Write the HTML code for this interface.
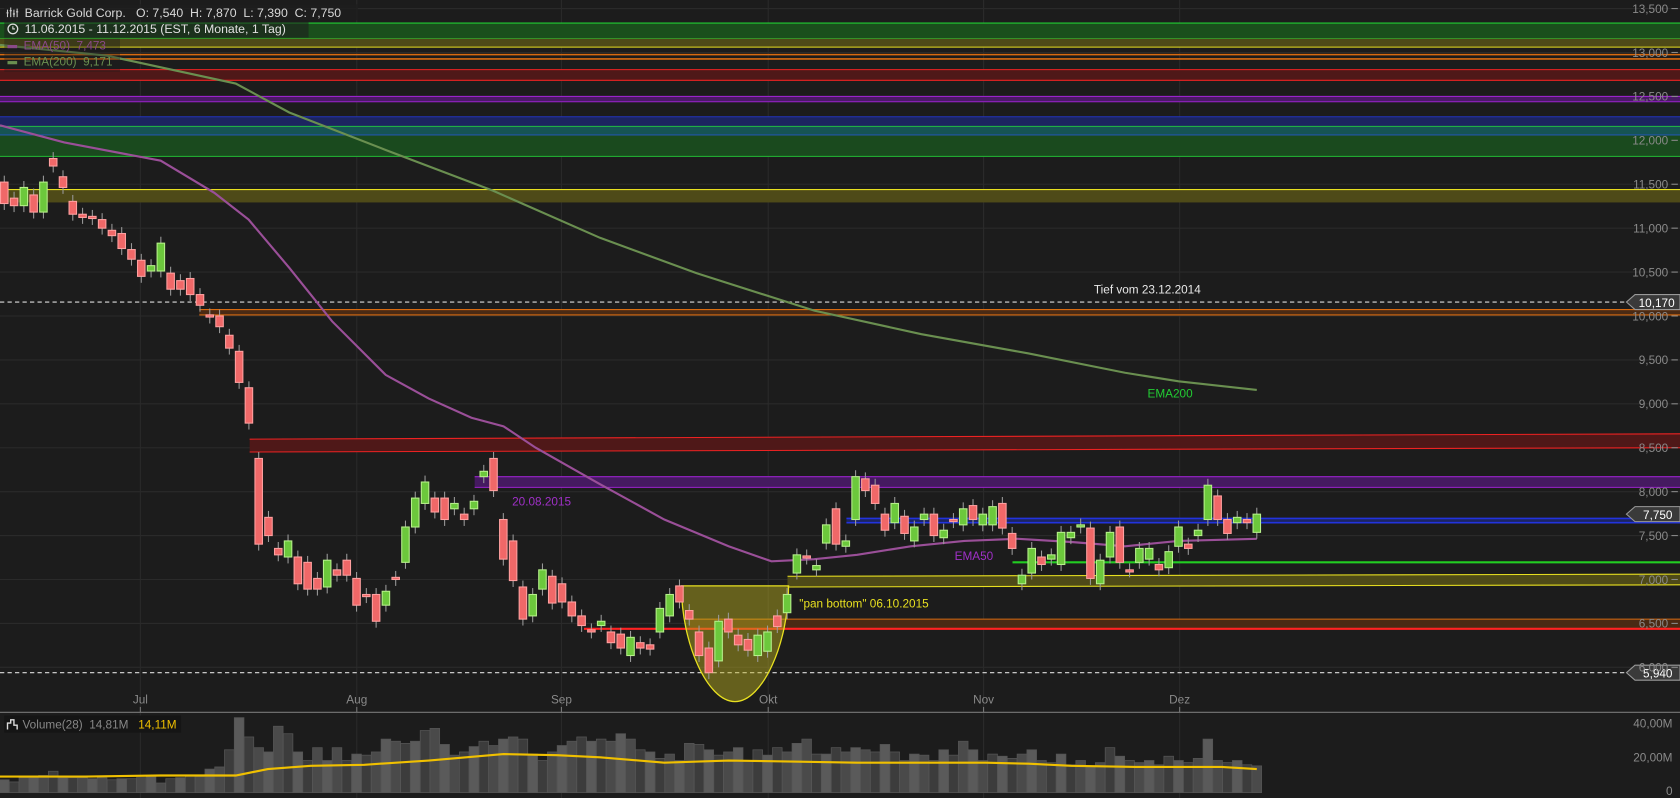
<!DOCTYPE html>
<html><head><meta charset="utf-8"><style>
html,body{margin:0;padding:0;background:#1c1c1c;overflow:hidden}
svg{display:block}
text{font-family:"Liberation Sans",sans-serif;white-space:pre}
</style></head><body>
<svg id="c" width="1680" height="798" viewBox="0 0 1568 745" preserveAspectRatio="none" xmlns="http://www.w3.org/2000/svg" xml:space="preserve">
<rect width="1568" height="745" fill="#1c1c1c"/>
<g id="grid" stroke="#2a2a2a" stroke-width="1"></g>
<rect x="0" y="21" width="1568" height="15" fill="#1a4f1c"/>
<line x1="0" y1="21.5" x2="1568" y2="21.5" stroke="#22cc33"/>
<line x1="0" y1="36" x2="1568" y2="36" stroke="#22cc33"/>
<rect x="0" y="36" width="1568" height="8" fill="#4e4a18"/>
<line x1="0" y1="44" x2="1568" y2="44" stroke="#e8e020"/>
<line x1="0" y1="51" x2="1568" y2="51" stroke="#d86a10" stroke-width="1.5"/>
<line x1="0" y1="55" x2="1568" y2="55" stroke="#d86a10" stroke-width="1.5"/>
<rect x="0" y="65" width="1568" height="10" fill="#4f1818"/>
<line x1="0" y1="65" x2="1568" y2="65" stroke="#ee2222"/>
<line x1="0" y1="75" x2="1568" y2="75" stroke="#ee2222"/>
<rect x="0" y="90" width="1568" height="5" fill="#4a1a66"/>
<line x1="0" y1="90" x2="1568" y2="90" stroke="#9a22cc"/>
<line x1="0" y1="95" x2="1568" y2="95" stroke="#9a22cc"/>
<rect x="0" y="109" width="1568" height="9" fill="#1c2560"/>
<line x1="0" y1="109" x2="1568" y2="109" stroke="#2233bb"/>
<rect x="0" y="118" width="1568" height="8" fill="#165454"/>
<line x1="0" y1="118" x2="1568" y2="118" stroke="#22bb44"/>
<rect x="0" y="126" width="1568" height="20" fill="#1a4a1e"/>
<line x1="0" y1="126" x2="1568" y2="126" stroke="#2255aa"/>
<line x1="0" y1="146" x2="1568" y2="146" stroke="#22bb33"/>
<rect x="0" y="177" width="1568" height="12" fill="#4e4a18"/>
<line x1="0" y1="177" x2="1568" y2="177" stroke="#e8e020"/>
<line x1="0" y1="282" x2="1520" y2="282" stroke="#ddd" stroke-dasharray="4,3"/>
<rect x="186" y="289" width="1382" height="5" fill="#4a2a14"/>
<line x1="186" y1="289" x2="1568" y2="289" stroke="#d86a10"/>
<line x1="186" y1="294" x2="1568" y2="294" stroke="#d86a10"/>
<polygon points="233,410 1568,405 1568,418 233,422" fill="#4f1818"/>
<line x1="233" y1="410" x2="1568" y2="405" stroke="#ee2222"/>
<line x1="233" y1="422" x2="1568" y2="418" stroke="#ee2222"/>
<rect x="443" y="445" width="1125" height="10" fill="#451a60"/>
<line x1="443" y1="445" x2="1568" y2="445" stroke="#9a22cc"/>
<line x1="443" y1="455" x2="1568" y2="455" stroke="#9a22cc"/>
<rect x="790" y="484" width="778" height="4" fill="#1c2560"/>
<line x1="790" y1="484" x2="1568" y2="484" stroke="#2233dd" stroke-width="1.5"/>
<line x1="790" y1="488" x2="1568" y2="488" stroke="#2233dd" stroke-width="1.5"/>
<line x1="945" y1="525" x2="1568" y2="525" stroke="#22cc22" stroke-width="2"/>
<polygon points="735,538 1568,536 1568,546 735,548" fill="#4e4a18"/>
<line x1="735" y1="538" x2="1568" y2="536" stroke="#e8e020"/>
<line x1="735" y1="548" x2="1568" y2="546" stroke="#e8e020"/>
<rect x="643" y="578" width="925" height="9" fill="#4a2a14"/>
<line x1="643" y1="578" x2="1568" y2="578" stroke="#d86a10"/>
<line x1="545" y1="587" x2="1568" y2="587" stroke="#ff2222" stroke-width="2"/>
<line x1="0" y1="628" x2="1520" y2="628" stroke="#ddd" stroke-dasharray="4,3"/>
<path d="M636,547 L736,547 C736,600 712,655 686,655 C660,655 636,600 636,547 Z" fill="rgba(190,180,30,0.45)" stroke="#e8e020" stroke-width="1.2"/>
<polyline fill="none" stroke="#6a8f50" stroke-width="2" points="0,42 100,52 220,78 270,105 360,140 460,178 560,222 650,255 760,290 860,312 960,330 1050,348 1100,356 1173,364"/>
<polyline fill="none" stroke="#9a4f98" stroke-width="2" points="0,117 60,133 150,150 200,180 232,205 270,250 310,300 360,350 400,372 440,390 470,398 500,418 560,452 620,485 680,510 720,524 760,522 800,518 850,510 900,505 950,503 1000,506 1050,510 1100,505 1173,503"/>
<g id="candles"></g>
<text x="1021" y="274" fill="#e8e8e8" font-size="11">Tief vom 23.12.2014</text>
<text x="1071" y="371" fill="#22cc33" font-size="11">EMA200</text>
<text x="478" y="472" fill="#a030c8" font-size="11">20.08.2015</text>
<text x="891" y="523" fill="#a030c8" font-size="11">EMA50</text>
<text x="746" y="567" fill="#e8e020" font-size="11">"pan bottom" 06.10.2015</text>
<polygon points="1518,282 1526,275 1568,275 1568,289 1526,289" fill="#3a3a3a" stroke="#999"/>
<text x="1563" y="286.5" fill="#fff" font-size="11" text-anchor="end">10,170</text>
<polygon points="1518,480 1526,473 1568,473 1568,487 1526,487" fill="#3a3a3a" stroke="#999"/>
<text x="1561" y="484.5" fill="#fff" font-size="11" text-anchor="end">7,750</text>
<polygon points="1518,628 1526,621 1568,621 1568,635 1526,635" fill="#3a3a3a" stroke="#999"/>
<text x="1561" y="632.5" fill="#fff" font-size="11" text-anchor="end">5,940</text>
<g id="axis" fill="#8a8a8a" font-size="11"></g>
<rect x="4" y="4" width="330" height="15" fill="rgba(30,30,30,0.75)"/>
<path d="M7,9 V16 M10,7 V16 M13,9 V16 M16,8 V16 M6,12 H8 M9,10 H11 M12,13 H14 M15,11 H17" stroke="#ccc" stroke-width="1"/>
<text x="23" y="16" fill="#d8d8d8" font-size="11.5">Barrick Gold Corp.   O: 7,540  H: 7,870  L: 7,390  C: 7,750</text>
<rect x="4" y="20" width="284" height="15" fill="rgba(30,30,30,0.6)"/>
<circle cx="12" cy="27" r="4.5" fill="none" stroke="#ddd" stroke-width="1.2"/>
<path d="M12,24.5 V27 H14" fill="none" stroke="#ddd" stroke-width="1"/>
<text x="23" y="31" fill="#e0e0e0" font-size="11.5">11.06.2015 - 11.12.2015 (EST, 6 Monate, 1 Tag)</text>
<rect x="4" y="36" width="108" height="31" fill="rgba(30,30,30,0.35)"/>
<rect x="7" y="42" width="9" height="3" fill="#8a4a88"/>
<text x="22" y="46" fill="#8a4a88" font-size="11">EMA(50)  7,473</text>
<rect x="7" y="57" width="9" height="3" fill="#6a8f50"/>
<text x="22" y="61" fill="#6a8f50" font-size="11">EMA(200)  9,171</text>
<line x1="0" y1="665" x2="1568" y2="665" stroke="#777"/>
<g id="vol"></g>
<polyline fill="none" stroke="#f0c000" stroke-width="2" points="0,725 80,725 150,724 220,724 250,718 290,715 340,714 400,710 470,704 520,705 560,707 620,712 680,710 740,711 800,712 860,712 920,712 960,713 1000,715 1060,716 1120,716 1140,716 1173,718"/>
<rect x="4" y="668" width="165" height="16" fill="#151515"/>
<path d="M7,681 V675 H10 V672 H13 V677 H16 V681" fill="none" stroke="#ddd" stroke-width="1.3"/>
<text x="21" y="680" fill="#888" font-size="11">Volume(28)  14,81M</text>
<text x="129" y="680" fill="#f0c000" font-size="11">14,11M</text>
<text x="1561" y="679" fill="#8a8a8a" font-size="11" text-anchor="end">40,00M</text>
<text x="1561" y="711" fill="#8a8a8a" font-size="11" text-anchor="end">20,00M</text>
<text x="1561" y="742" fill="#8a8a8a" font-size="11" text-anchor="end">0</text>
</svg>
<script>
var NS="http://www.w3.org/2000/svg";
function el(t,a,p){var e=document.createElementNS(NS,t);for(var k in a)e.setAttribute(k,a[k]);(p||document.getElementById("c")).appendChild(e);return e;}
var grid=document.getElementById("grid"),axis=document.getElementById("axis");
function y(p){return 8+(13500-p)*0.082;}
for(var p=13500;p>=6000;p-=500){var yy=y(p);el("line",{x1:0,y1:yy,x2:1568,y2:yy},grid);
 var t=el("text",{x:1557,y:yy+4,"text-anchor":"end"},axis);t.textContent=(p/1000).toFixed(3).replace(".",",");
 el("line",{x1:1560,y1:yy,x2:1566,y2:yy,stroke:"#8a8a8a"},axis);}
var months=[["Jul",131],["Aug",333],["Sep",524],["Okt",717],["Nov",918],["Dez",1101]];
months.forEach(function(m){el("line",{x1:m[1],y1:0,x2:m[1],y2:745},grid);
 var t=el("text",{x:m[1],y:657,"text-anchor":"middle"},axis);t.textContent=m[0];
 el("line",{x1:m[1],y1:660,x2:m[1],y2:665,stroke:"#777"},axis);});
var d=[[170,190,0],[185,192,0],[175,192,1],[182,198,0],[170,198,1],[148,155,0],[165,175,0],[188,200,0],[200,203,0],[202,204,0],[205,213,0],[215,220,0],[218,232,0],[233,242,0],[243,258,0],[248,253,1],[227,253,1],[255,270,0],[262,270,0],[260,275,0],[275,285,0],[294,296,0],[295,305,0],[313,325,0],[328,357,0],[362,395,0],[428,508,0],[483,500,0],[512,518,0],[505,520,1],[520,545,0],[525,550,0],[540,550,0],[523,548,1],[532,537,0],[523,537,0],[540,565,0],[555,557,0],[555,580,0],[552,565,1],[539,541,0],[492,525,1],[465,492,1],[450,470,1],[465,478,0],[465,485,0],[470,475,1],[480,485,0],[468,475,1],[440,445,1],[428,458,0],[485,522,0],[505,542,0],[548,578,0],[555,575,1],[532,550,1],[538,563,0],[545,562,0],[562,575,0],[575,584,0],[588,590,0],[580,584,1],[590,600,0],[592,605,0],[595,612,1],[600,605,0],[602,606,0],[568,590,1],[555,575,1],[547,562,0],[570,578,0],[590,612,0],[605,628,0],[580,617,1],[578,590,0],[593,602,0],[597,607,0],[593,612,1],[590,608,1],[575,585,0],[555,572,1],[518,535,1],[519,521,0],[528,532,1],[490,507,1],[475,508,0],[505,510,1],[445,485,1],[447,458,0],[453,470,0],[480,495,0],[470,488,1],[482,498,0],[492,505,1],[480,485,1],[480,500,0],[495,502,1],[485,487,0],[475,490,1],[472,485,0],[480,490,1],[473,490,1],[470,493,0],[498,512,0],[537,545,1],[512,535,1],[520,527,0],[518,522,1],[497,527,1],[497,502,1],[490,492,1],[493,540,0],[523,545,1],[497,520,1],[492,525,0],[532,533,0],[512,525,1],[512,522,1],[527,532,0],[515,530,1],[492,510,1],[508,512,0],[495,500,1],[453,485,1],[463,485,0],[485,498,0],[483,488,1],[485,488,0],[480,497,1]];
var cg=document.getElementById("candles"),n=d.length,step=(1173-4)/(n-1);
var vg=document.getElementById("vol");
var vols=[12,10,14,15,16,20,15,14,14,13,14,12,13,13,14,15,9,13,14,16,15,22,24,40,70,52,42,38,62,55,38,30,42,30,42,30,36,35,38,50,48,46,48,58,60,45,35,38,43,48,44,50,52,50,36,30,38,44,48,52,48,50,48,55,50,40,38,32,36,30,46,45,40,35,38,42,30,40,35,42,38,46,50,36,36,42,38,42,40,38,45,38,30,36,35,30,40,35,48,40,30,36,34,32,36,40,30,28,36,26,30,25,28,42,34,30,28,30,26,34,30,28,32,50,30,28,30,26,25];
for(var i=0;i<n;i++){var x=4+i*step,c=d[i],g=c[2];
 el("line",{x1:x,y1:c[0]-6,x2:x,y2:c[1]+6,stroke:"#999","stroke-width":1},cg);
 var h=Math.max(c[1]-c[0],2);
 el("rect",{x:x-3.5,y:c[0],width:7,height:h,fill:g?"#6cc83c":"#f06868",stroke:g?"#b6f08a":"#ffa0a0","stroke-width":1},cg);
 var v=vols[i%vols.length]*1.0;
 el("rect",{x:x-4.5,y:740-v,width:9,height:v,fill:(i%3==0)?"#5a5a5a":(i%2?"#3c3c3c":"#4a4a4a"),stroke:"#555","stroke-width":0.7},vg);}
</script>
</body></html>
